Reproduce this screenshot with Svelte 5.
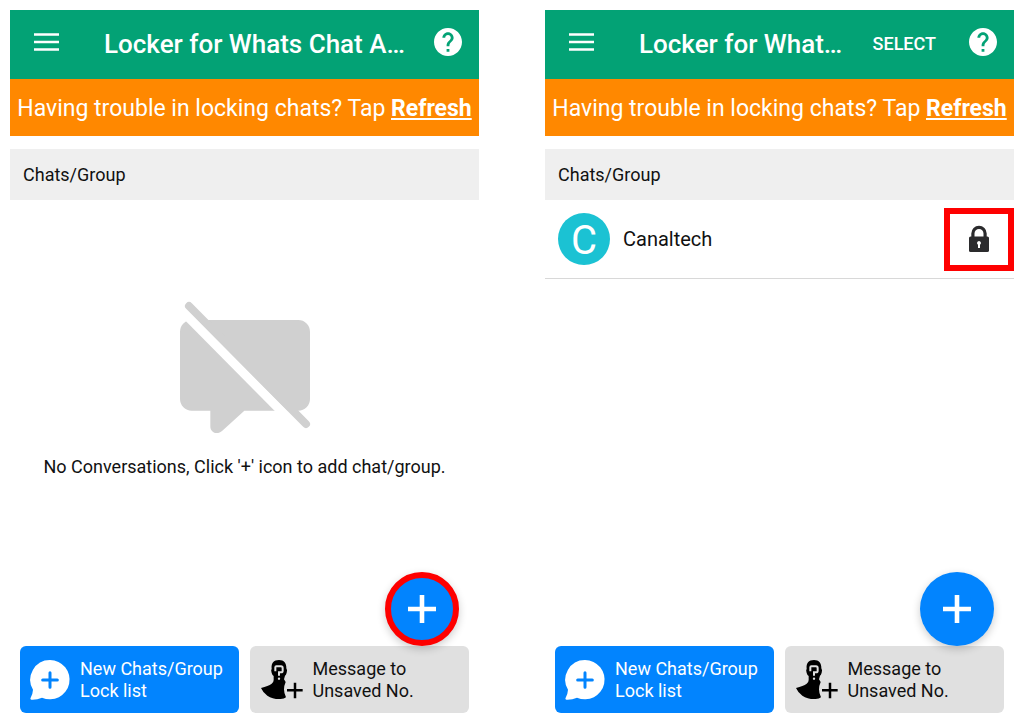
<script lang="ts">
	type Chat = { name: string; color: string };
	type Screen = {
		id: string;
		title: string;
		selectable: boolean;
		highlightAdd: boolean;
		chats: Chat[];
	};

	const screens: Screen[] = [
		{ id: 'empty', title: 'Locker for Whats Chat A…', selectable: false, highlightAdd: true, chats: [] },
		{
			id: 'locked',
			title: 'Locker for What…',
			selectable: true,
			highlightAdd: false,
			chats: [{ name: 'Canaltech', color: '#1bc2d3' }]
		}
	];
</script>

<main class="screens">
	{#each screens as screen (screen.id)}
		<section class="screen">
			<header class="app-bar">
				<button class="icon-btn" aria-label="Menu">
					<svg width="25" height="18" viewBox="0 0 25 18">
						<path d="M0 1.5h25M0 9h25M0 16.500h25" stroke="#fff" stroke-width="2.6" />
					</svg>
				</button>
				<h1>{screen.title}</h1>
				{#if screen.selectable}
					<button class="select-btn">SELECT</button>
				{/if}
				<button class="icon-btn" aria-label="Help">
					<svg width="28" height="28" viewBox="2 2 20 20">
						<path
							fill="#fff"
							d="M12 2C6.480 2 2 6.480 2 12s4.480 10 10 10 10-4.480 10-10S17.520 2 12 2zm1 17h-2v-2h2v2zm2.070-7.750l-.9.920C13.450 12.900 13 13.500 13 15h-2v-.5c0-1.100.450-2.100 1.170-2.830l1.240-1.260c.370-.360.590-.860.590-1.410 0-1.100-.9-2-2-2s-2 .9-2 2H8c0-2.210 1.790-4 4-4s4 1.790 4 4c0 .880-.360 1.680-.930 2.250z"
						/>
					</svg>
				</button>
			</header>

			<p class="banner">Having trouble in locking chats? Tap <a href="#refresh">Refresh</a></p>

			<h2>Chats/Group</h2>

			{#if screen.chats.length}
				<ul class="chats">
					{#each screen.chats as chat}
						<li>
							<span class="avatar" style="background: {chat.color}">{chat.name[0]}</span>
							<span class="name">{chat.name}</span>
							<button class="lock-btn" aria-label="Unlock {chat.name}">
								<svg width="20" height="26" viewBox="0 0 20 26">
									<path d="M3.900 12V7.400a6.100 6.100 0 0 1 12.200 0V12" fill="none" stroke="#2b2b2d" stroke-width="3.2" />
									<rect y="10.500" width="20" height="15.500" rx="1.6" fill="#2b2b2d" />
									<path d="M10 15a2 2 0 0 1 1 3.700V22H9v-3.300A2 2 0 0 1 10 15z" fill="#fff" />
								</svg>
							</button>
						</li>
					{/each}
				</ul>
			{:else}
				<div class="empty">
					<!-- speech bubble struck through -->
					<svg width="130" height="132" viewBox="57 36 390 396" aria-hidden="true">
						<path
							fill="#d0d0d0"
							d="M92 90H412A35 35 0 0 1 447 125V327A35 35 0 0 1 412 362H250L184 422C168 437 148 426 148 410V362H92A35 35 0 0 1 57 327V125A35 35 0 0 1 92 90Z"
						/>
						<path d="M50 49L436 439" stroke="#fff" stroke-width="28" />
						<path d="M84 48L435 402" stroke="#d0d0d0" stroke-width="24" stroke-linecap="round" />
					</svg>
					<p>No Conversations, Click '+' icon to add chat/group.</p>
				</div>
			{/if}

			<footer>
				<button class="fab" class:highlight={screen.highlightAdd} aria-label="Add chat or group">
					<svg width="28" height="28" viewBox="0 0 28 28">
						<path d="M14 0v28M0 14h28" stroke="#fff" stroke-width="4.6" />
					</svg>
				</button>
				<button class="action primary">
					<svg width="40" height="40" viewBox="0 0 120 120">
						<path
							fill="#fff"
							d="M60 0a59 59 0 1 1-24 113Q20 120 4 119Q-1 118 2 113Q8 104 9 89A59 59 0 0 1 60 0z"
						/>
						<path d="M60 38v44M38 60h44" stroke="#0284fe" stroke-width="9" stroke-linecap="round" />
					</svg>
					<span>New Chats/Group<br />Lock list</span>
				</button>
				<button class="action">
					<svg width="42" height="40" viewBox="0 0 126 120">
						<path
							d="M54 0C69 0 77 10 76 25Q80 30 77 38Q75 45 72 47L69 58L74 66Q69 77 69 88Q69 101 75 112Q69 118 55 117Q34 117 19 107Q6 98 0 84Q22 78 32 71Q38 67 38 60V48Q34 46 32 39Q29 30 32 26C30 10 38 0 54 0z"
						/>
						<path
							d="M43 34V22Q43 19 46 19H60Q65 19 65 24V32Q65 37 60 37H54V47"
							fill="none"
							stroke="#e0e0e0"
							stroke-width="6"
						/>
						<circle cx="54" cy="56" r="3.500" fill="#e0e0e0" />
						<path d="M102 68v47M78 91h47" stroke="#000" stroke-width="7.5" />
					</svg>
					<span>Message to<br />Unsaved No.</span>
				</button>
			</footer>
		</section>
	{/each}
</main>

<style>
	:global(body) {
		margin: 0;
		background: #fff;
	}

	.screens {
		display: grid;
		grid-template-columns: 1fr 1fr;
		gap: 66px;
		box-sizing: border-box;
		min-height: 100vh;
		padding: 10px 10px 11px;
		font-family: Roboto, 'Liberation Sans', sans-serif;
		color: #111;
	}

	.screen {
		display: flex;
		flex-direction: column;
		min-width: 0;
	}

	button {
		padding: 0;
		border: 0;
		background: none;
		font: inherit;
		color: inherit;
		cursor: pointer;
	}

	svg {
		display: block;
		flex: none;
		overflow: visible;
	}

	.app-bar {
		display: flex;
		align-items: center;
		box-sizing: border-box;
		height: 69px;
		padding: 0 17px 2px 24px;
		background: #03a275;
		color: #fff;
	}

	.icon-btn {
		flex: none;
		padding-bottom: 4px;
	}

	h1 {
		flex: 1;
		margin: 0 0 0 45px;
		font-size: 26px;
		font-weight: 500;
		line-height: 32px;
		white-space: nowrap;
	}

	.select-btn {
		margin-right: 33px;
		font-size: 18px;
		font-weight: 500;
	}

	.banner {
		margin: 0 0 13px;
		padding-top: 2px;
		background: #ff8800;
		color: #fff;
		font-size: 23px;
		line-height: 55px;
		text-align: center;
		white-space: nowrap;
	}

	.banner a {
		color: inherit;
		font-weight: 700;
	}

	h2 {
		margin: 0;
		padding: 0 13px;
		background: #efefef;
		font-size: 18px;
		font-weight: 400;
		line-height: 51px;
	}

	.chats {
		margin: 0;
		padding: 0;
		list-style: none;
	}

	.chats li {
		display: flex;
		align-items: center;
		height: 78px;
		padding-left: 13px;
		border-bottom: 1px solid #d8d8d8;
	}

	.avatar {
		width: 52px;
		height: 52px;
		border-radius: 50%;
		color: #fff;
		font-size: 40px;
		line-height: 56px;
		text-align: center;
	}

	.name {
		flex: 1;
		margin-left: 13px;
		font-size: 20px;
	}

	.lock-btn {
		display: grid;
		place-items: center;
		box-sizing: border-box;
		width: 70px;
		height: 63px;
		border: 6px solid #fe0000;
	}

	.empty {
		display: flex;
		flex-direction: column;
		align-items: center;
		padding-top: 102px;
	}

	.empty p {
		margin: 22px 0 0;
		font-size: 18px;
		line-height: 22px;
	}

	footer {
		position: relative;
		display: flex;
		gap: 11px;
		margin-top: auto;
		padding: 0 10px;
	}

	.action {
		display: flex;
		flex: 1;
		align-items: center;
		gap: 10px;
		height: 67px;
		padding-left: 11px;
		border-radius: 6px;
		background: #e0e0e0;
		font-size: 18px;
		line-height: 22px;
		text-align: left;
		white-space: nowrap;
	}

	.primary {
		padding-left: 10px;
		background: #0284fe;
		color: #fff;
	}

	/* floats over the list, resting on the action buttons */
	.fab {
		position: absolute;
		right: 20px;
		bottom: 100%;
		display: grid;
		place-items: center;
		box-sizing: border-box;
		width: 74px;
		height: 74px;
		border-radius: 50%;
		background: #0284fe;
		box-shadow: 0 3px 8px rgba(0, 0, 0, 0.2);
	}

	.fab.highlight {
		border: 6px solid #fe0000;
	}
</style>
